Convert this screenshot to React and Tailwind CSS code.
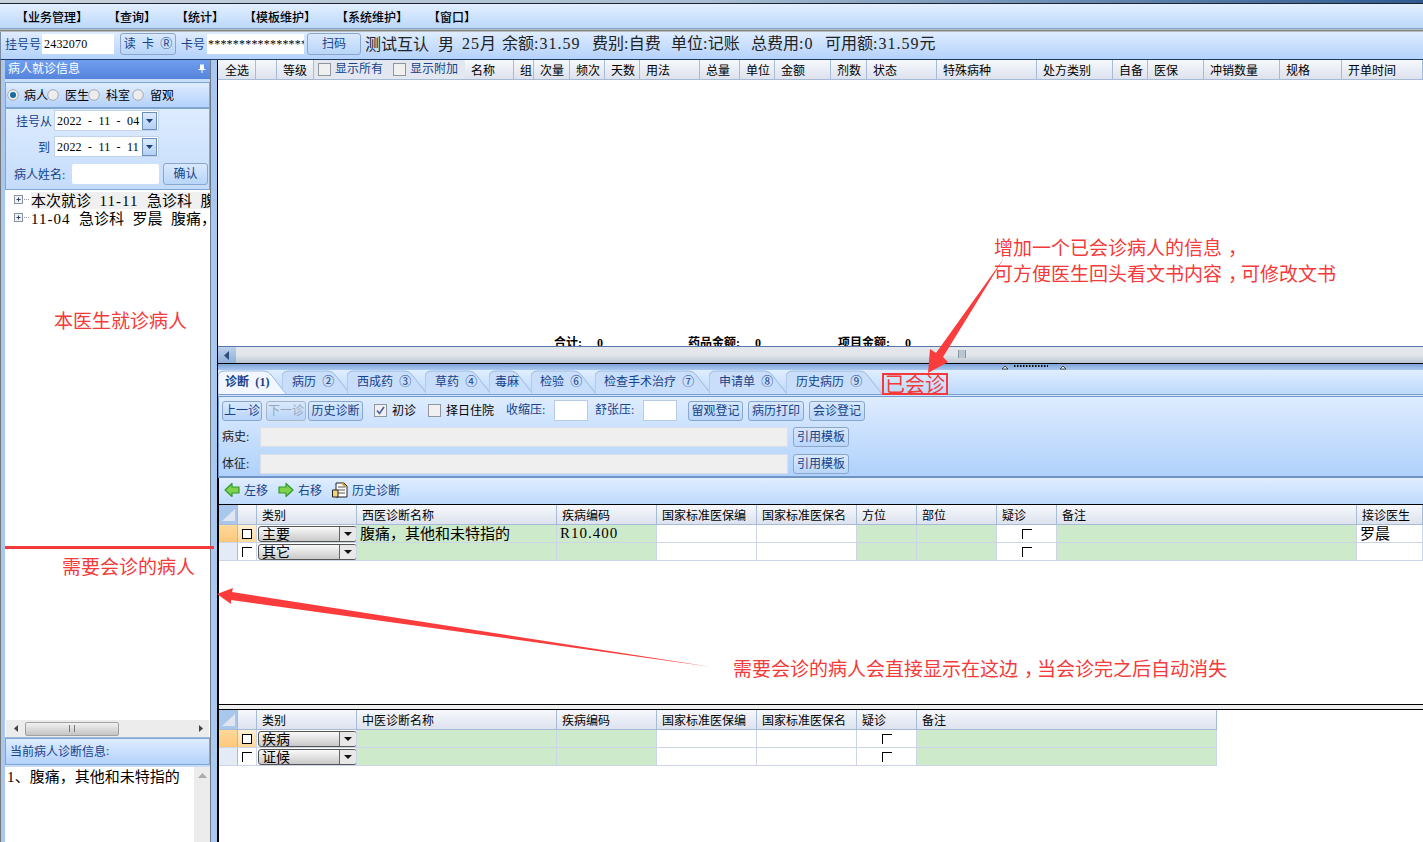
import React from "react";

const T = ({ children, wide }) => {
  const parts = String(children).split(/([\x20-\x7e]+)/);
  return (
    <>
      {parts.map((p, i) =>
        /^[\x20-\x7e]+$/.test(p) ? (
          <span key={i} className={`font-['Liberation_Serif',serif] [word-spacing:0.25em] ${wide ? "tracking-[1px]" : "tracking-[0.2px]"}`}>{p}</span>
        ) : (
          <React.Fragment key={i}>{p}</React.Fragment>
        )
      )}
    </>
  );
};

const Btn = ({ w, children, disabled, h = "h-[20px]", className = "" }) => (
  <div
    style={{ width: w }}
    className={`${h} ${className} shrink-0 flex items-center justify-center pb-[2px] rounded-[3px] border border-[#8aa6cc] bg-gradient-to-b from-[#d9e9fd] to-[#b9d5f8] text-[12px] ${disabled ? "text-[#9aa6b5] border-[#a9b5c5]" : "text-[#15428b]"}`}
  >
    <T>{children}</T>
  </div>
);

const Radio = ({ on }) => (
  <svg width="12" height="12" viewBox="0 0 12 12" className="shrink-0">
    <circle cx="6" cy="6" r="5.3" fill="#ededed" stroke="#a5a9ae" />
    {on && <circle cx="6" cy="6" r="3" fill="#156a9e" />}
  </svg>
);

const Check = ({ on }) => (
  <div className="w-[13px] h-[13px] shrink-0 border border-[#8f969e] bg-[#f0f0f0] flex items-center justify-center">
    {on && (
      <svg width="11" height="11" viewBox="0 0 11 11">
        <path d="M2 5.5 L4.5 8.5 L9 2" fill="none" stroke="#4a5f9c" strokeWidth="1.6" />
      </svg>
    )}
  </div>
);

const DateBox = ({ value }) => (
  <div className="w-[105px] h-[21px] bg-white border border-[#c3d3ea] flex items-center pl-[2px] justify-between text-[12px] text-black">
    <span><T>{value}</T></span>
    <div className="w-[15px] h-[18px] mr-px bg-gradient-to-b from-[#dceafd] to-[#b4d0f5] border border-[#6d8fbe] flex items-center justify-center">
      <svg width="7" height="4" viewBox="0 0 7 4"><path d="M0 0H7L3.5 4Z" fill="#1e3f7a" /></svg>
    </div>
  </div>
);

const topCols = [
  ["全选", 38], ["", 21], ["等级", 37], ["__extra", 151], ["名称", 49], ["组", 20], ["次量", 36], ["频次", 35], ["天数", 35],
  ["用法", 60], ["总量", 40], ["单位", 35], ["金额", 56], ["剂数", 36], ["状态", 70], ["特殊病种", 100], ["处方类别", 76],
  ["自备", 35], ["医保", 56], ["冲销数量", 76], ["规格", 62], ["开单时间", 81],
];

const Tab = ({ w, label, active, pl, ml = 0 }) => (
  <div style={{ width: w, marginLeft: ml, paddingLeft: pl }} className={`relative h-[24px] shrink-0 flex items-center pb-[2px] text-[12px] text-[#15428b] ${active ? "z-10 font-bold" : ""}`}>
    <svg className="absolute inset-0" width={w} height="24">
      <path
        d={`M0 24 V7 Q0 1 7 1 H${w - 22} Q${w - 17} 1 ${w - 14} 6 L${w} 24`}
        fill={active ? "#f2f7ff" : "#c9defa"}
        stroke="#9db9dd"
      />
    </svg>
    <span className="relative"><T>{label}</T></span>
  </div>
);

const Head = ({ w, label, pl = 5 }) => (
  <div style={{ width: w, paddingLeft: pl }} className="shrink-0 h-full border-r border-[#a5bbd6] flex items-center text-[12px] text-black">
    {label}
  </div>
);

const Corner = () => (
  <div className="w-[19px] shrink-0 h-full border-r border-[#a5bbd6] bg-[#a9c6ec] flex items-center justify-center">
    <svg width="15" height="14" viewBox="0 0 15 14"><path d="M14 1V13H1Z" fill="#dfe6f0" /></svg>
  </div>
);

const Combo = ({ label }) => (
  <div className="w-[99px] h-[16px] shrink-0 ml-px rounded-[3px] border border-[#555] bg-gradient-to-b from-[#fafafa] to-[#c9c9c9] flex items-center justify-between overflow-hidden text-[14px] text-black pl-[3px]">
    <span className="leading-[14px] pb-px">{label}</span>
    <div className="w-[17px] h-full border-l border-[#666] bg-[#e8e8e8] flex items-center justify-center">
      <svg width="8" height="4" viewBox="0 0 8 4"><path d="M0 0H8L4 4Z" fill="#111" /></svg>
    </div>
  </div>
);

const Cell = ({ w, green, children, center, className = "" }) => (
  <div style={{ width: w }} className={`shrink-0 h-full border-r border-[#ccd4e8] flex items-center text-[15px] text-black overflow-hidden ${green ? "bg-[#cdeacb]" : "bg-white"} ${center ? "justify-center" : "pl-[3px]"} ${className}`}>
    {children}
  </div>
);

const MiniCheck = () => (
  <div className="w-[10px] h-[10px] border-l border-t border-black" />
);

const RowLead = ({ sel }) => (
  <>
    <div className={`w-[19px] shrink-0 h-full border-r border-[#a5bbd6] ${sel ? "bg-gradient-to-b from-[#fcd89a] to-[#fdc87a]" : "bg-[#e4ebf7]"}`} />
    <div className={`w-[19px] shrink-0 h-full border-r border-[#ccd4e8] flex items-center justify-center ${sel ? "bg-gradient-to-b from-[#fff0d5] to-[#fcd89a]" : "bg-white"}`}>
      <div className={`w-[10px] h-[10px] border-l border-t border-black ${sel ? "border-r border-b bg-white" : ""}`} />
    </div>
  </>
);

const HeaderRow = ({ cols, h }) => (
  <div className={`flex ${h} bg-gradient-to-b from-[#f6f8fb] to-[#dde2ee] border-b border-[#a5bbd6]`}>
    <Corner />
    {cols.map((c, i) => (
      <Head key={i} w={c[1]} label={c[0]} />
    ))}
  </div>
);

const Arrow = ({ dir }) => (
  <svg width="16" height="16" viewBox="0 0 16 16" className="shrink-0">
    <path
      d={dir === "l" ? "M1 8 L8 1.5 V5 H15 V11 H8 V14.5 Z" : "M15 8 L8 1.5 V5 H1 V11 H8 V14.5 Z"}
      fill="#7fd24a"
      stroke="#2f9a2a"
      strokeWidth="1.2"
      strokeLinejoin="round"
    />
  </svg>
);

const diagCols = [["", 19], ["类别", 100], ["西医诊断名称", 200], ["疾病编码", 100], ["国家标准医保编", 100], ["国家标准医保名", 100], ["方位", 60], ["部位", 80], ["疑诊", 60], ["备注", 300], ["接诊医生", 66]];
const tcmCols = [["", 19], ["类别", 100], ["中医诊断名称", 200], ["疾病编码", 100], ["国家标准医保编", 100], ["国家标准医保名", 100], ["疑诊", 60], ["备注", 300]];

const DiagRow = ({ sel, combo, name, code, doctor }) => (
  <div className="flex h-[18px] border-b border-[#ccd4e8]">
    <RowLead sel={sel} />
    <Cell w={100} className="!pl-0"><Combo label={combo} /></Cell>
    <Cell w={200} green className="pb-[3px]"><T>{name}</T></Cell>
    <Cell w={100} green><T wide>{code}</T></Cell>
    <Cell w={100} />
    <Cell w={100} />
    <Cell w={60} green />
    <Cell w={80} green />
    <Cell w={60} center><MiniCheck /></Cell>
    <Cell w={300} green />
    <Cell w={66} className="pb-[3px]">{doctor}</Cell>
  </div>
);

const TcmRow = ({ sel, combo }) => (
  <div className="flex h-[18px] w-[998px] border-b border-[#ccd4e8]">
    <RowLead sel={sel} />
    <Cell w={100} className="!pl-0"><Combo label={combo} /></Cell>
    <Cell w={200} green />
    <Cell w={100} green />
    <Cell w={100} />
    <Cell w={100} />
    <Cell w={60} center><MiniCheck /></Cell>
    <Cell w={300} green />
  </div>
);

export default function App() {
  return (
    <div className="relative w-[1423px] h-[842px] overflow-hidden whitespace-pre flex flex-col bg-[#b4d0f5] font-['Noto_Sans_CJK_SC',sans-serif] leading-none">
      {/* window top */}
      <div className="h-[3px] shrink-0 bg-gradient-to-r from-[#c9d3dc] via-[#a9bed2] to-[#2f5a8f]" />
      <div className="h-px shrink-0 bg-[#1b2433]" />
      {/* menu */}
      <div className="h-[25px] shrink-0 flex items-center gap-5 pl-[16px] pt-px bg-gradient-to-b from-[#e3efff] to-[#bcd8fb] border-b border-[#7fa6d3] text-[12px] font-medium text-black">
        <span>【业务管理】</span>
        <span>【查询】</span>
        <span>【统计】</span>
        <span>【模板维护】</span>
        <span>【系统维护】</span>
        <span>【窗口】</span>
      </div>
      <div className="h-[3px] shrink-0 bg-gradient-to-b from-[#dfe3e8] via-[#7f7f7f] to-[#d5dbe3]" />
      {/* patient toolbar */}
      <div className="h-[28px] shrink-0 flex items-center pl-[4px] pb-[4px] bg-gradient-to-b from-[#deecff] to-[#b4d2fb] border-b border-[#1f3a66] border-l border-l-[#7a8ea8]">
        <span className="w-[36px] text-[12px] text-[#15428b]">挂号号</span>
        <div className="ml-px w-[72px] h-[20px] bg-white flex items-center pl-[2px] text-[12px] text-black"><T>2432070</T></div>
        <Btn w={56} h="h-[22px]" className="ml-[6px]">读 卡 Ⓡ</Btn>
        <span className="ml-[5px] w-[25px] text-[12px] text-[#15428b]">卡号</span>
        <div className="ml-[1px] w-[97px] h-[20px] bg-white flex items-center pl-[1px] text-[12px] text-black overflow-hidden"><T>****************</T></div>
        <Btn w={54} h="h-[22px]" className="ml-[3px]">扫码</Btn>
        <div className="ml-[4px] flex items-center pb-[2px] text-[16px] text-[#222]">
          <span className="w-[73px]">测试互认</span>
          <span className="w-[24px]">男</span>
          <span className="w-[40px]"><T wide>25</T>月</span>
          <span className="w-[90px]">余额<T wide>:31.59</T></span>
          <span className="w-[79px]">费别<T>:</T>自费</span>
          <span className="w-[80px]">单位<T>:</T>记账</span>
          <span className="w-[74px]">总费用<T wide>:0</T></span>
          <span>可用额<T wide>:31.59</T>元</span>
        </div>
      </div>

      <div className="flex-1 flex min-h-0">
        {/* LEFT */}
        <div className="w-[218px] shrink-0 flex">
          <div className="w-[5px] shrink-0 border-l border-[#777] bg-[#a9c8f0]" />
          <div className="w-[206px] shrink-0 flex flex-col border-r border-[#6f7a88] bg-white">
            <div className="h-[19px] shrink-0 bg-gradient-to-b from-[#6f9eef] to-[#5584dc] flex items-center justify-between pl-[3px] pr-[4px] pb-[3px] text-[12px] text-white">
              <span>病人就诊信息</span>
              <svg width="8" height="9" viewBox="0 0 8 9"><path d="M2 0.5H6V5H7.5V6H4.5V9H3.5V6H0.5V5H2Z" fill="#fff" /></svg>
            </div>
            <div className="h-[3px] shrink-0 bg-[#c9dcf6]" />
            <div className="h-[26px] shrink-0 flex items-center pl-[1px] bg-gradient-to-b from-[#deecff] to-[#b4d2fb] border border-[#7fa6d3] text-[12px] text-black">
              <Radio on />
              <span className="ml-[5px] mr-[-1px]">病人</span>
              <Radio />
              <span className="ml-[6px] mr-[-1px]">医生</span>
              <Radio />
              <span className="ml-[6px]">科室</span>
              <span className="ml-[2px]"><Radio /></span>
              <span className="ml-[6px]">留观</span>
            </div>
            <div className="h-[82px] shrink-0 flex flex-col bg-gradient-to-b from-[#deecff] to-[#c4dcfb] border border-[#7fa6d3] border-t-[#7fa6d3] pt-[1px]">
              <div className="flex items-center h-[21px] text-[12px] text-[#15428b]">
                <span className="ml-[10px] w-[38px]">挂号从</span>
                <DateBox value="2022 - 11 - 04" />
              </div>
              <div className="flex items-center h-[21px] mt-[5px] text-[12px] text-[#15428b]">
                <span className="ml-[32px] w-[16px]">到</span>
                <DateBox value="2022 - 11 - 11" />
              </div>
              <div className="flex items-center h-[22px] mt-[6px] text-[12px] text-[#15428b]">
                <span className="ml-[8px] w-[58px]">病人姓名<T>:</T></span>
                <div className="w-[87px] h-[20px] bg-white rounded-[2px]" />
                <Btn w={45} h="h-[22px]" className="ml-[4px]">确认</Btn>
              </div>
            </div>
            {/* tree */}
            <div className="flex-1 min-h-0 pt-[1px] overflow-hidden text-[15px] text-black">
              {["本次就诊 11-11 急诊科 腹痛，其他和未特指的", "11-04 急诊科 罗晨 腹痛，其他和未特指的"].map((t, i) => (
                <div key={i} className="flex items-center h-[18px] pl-[9px]">
                  <svg width="17" height="10" viewBox="0 0 17 10" className="shrink-0">
                    <rect x="0.5" y="0.5" width="8" height="8" fill="#eef1f6" stroke="#8a929e" />
                    <path d="M2.5 4.5H6.5M4.5 2.5V6.5" stroke="#2a3f6a" />
                    <path d="M10 4.5H15" stroke="#999" strokeDasharray="1 1" />
                  </svg>
                  <span className={`${i === 0 ? "bg-[#f0f0f0]" : ""}`}><T wide>{t}</T></span>
                </div>
              ))}
            </div>
            {/* h scroll */}
            <div className="h-[17px] shrink-0 mx-px bg-[#ececec] flex items-center">
              <svg width="19" height="9" viewBox="0 0 19 9" className="shrink-0"><path d="M12 1V8L8 4.5Z" fill="#444" /></svg>
              <div className="w-[94px] h-[14px] rounded-[2px] border border-[#a0a0a0] bg-gradient-to-b from-[#f2f2f2] to-[#c4c4c4] flex items-center justify-center">
                <div className="w-[6px] h-[7px] border-x border-[#777]" />
              </div>
              <div className="flex-1" />
              <svg width="16" height="9" viewBox="0 0 16 9" className="shrink-0"><path d="M6 1V8L10 4.5Z" fill="#444" /></svg>
            </div>
            <div className="h-[1px] shrink-0 bg-[#9fb9dc]" />
            <div className="h-[27px] shrink-0 flex items-center pl-[4px] pb-px bg-gradient-to-b from-[#deecff] to-[#b4d2fb] border border-[#7fa6d3] text-[12px] text-[#15428b]">
              当前病人诊断信息<T>:</T>
            </div>
            <div className="h-[2px] shrink-0 bg-[#c9dcf6]" />
            <div className="h-[75px] shrink-0 flex">
              <div className="flex-1 pl-[2px] text-[15px] text-black leading-[17px]"><T>1</T>、腹痛，其他和未特指的</div>
              <div className="w-[16px] bg-[#ececec] flex justify-center pt-[6px]">
                <svg width="9" height="5" viewBox="0 0 9 5"><path d="M0 5L4.5 0L9 5Z" fill="#aaa" /></svg>
              </div>
            </div>
          </div>
          <div className="w-[6px] shrink-0 bg-[#a9c8f0]" />
          <div className="w-px shrink-0 bg-black" />
        </div>

        {/* RIGHT */}
        <div className="flex-1 min-w-0 flex flex-col bg-white">
          <div className="flex h-[20px] shrink-0 bg-gradient-to-b from-[#f6f8fb] to-[#dde2ee] border-b border-[#a5bbd6] overflow-hidden">
            {topCols.map(([l, w], i) =>
              l === "__extra" ? (
                <div key={i} style={{ width: w }} className="shrink-0 flex items-center pl-[4px] text-[12px] text-[#15428b] bg-[#e3e8f0]">
                  <Check />
                  <span className="ml-[4px] pb-[4px]">显示所有</span>
                  <span className="ml-[10px]"><Check /></span>
                  <span className="ml-[4px] pb-[4px]">显示附加</span>
                </div>
              ) : (
                <Head key={i} w={w} label={l} pl={i === 0 ? 7 : 6} />
              )
            )}
          </div>
          <div className="h-[266px] shrink-0 flex items-end overflow-hidden">
            <div className="h-[11px] overflow-hidden flex pl-[336px] text-[12px] font-bold leading-[14px] text-black">
              <span className="w-[134px]">合计<T wide>:  0</T></span>
              <span className="w-[150px]">药品金额<T wide>:  0</T></span>
              <span>项目金额<T wide>:  0</T></span>
            </div>
          </div>
          {/* h scroll */}
          <div className="h-[18px] shrink-0 flex border-t border-[#5a75a8] border-b border-b-black bg-gradient-to-b from-[#e3e7eb] via-[#e3e7eb] to-[#b9c5d1]">
            <div className="w-[18px] shrink-0 bg-gradient-to-b from-[#bcd0ea] to-[#8fb0d8] flex items-center justify-center">
              <svg width="6" height="9" viewBox="0 0 6 9"><path d="M5 0V9L0 4.5Z" fill="#2e4d7b" /></svg>
            </div>
            <div className="ml-[722px] mt-[3px] w-[8px] h-[8px] border-x border-[#8a97a5] bg-[#b9c5d1]" />
          </div>
          {/* splitter */}
          <div className="h-[6px] shrink-0 bg-gradient-to-b from-[#7ea3d6] to-[#a9c8f0] flex items-center pl-[784px]">
            <svg width="64" height="6" viewBox="0 0 64 6">
              <path d="M0 5L3 2L6 5Z" fill="#eee" stroke="#111" strokeWidth="0.7" />
              <path d="M12 2H46" stroke="#111" strokeWidth="2" strokeDasharray="1.5 1.5" />
              <path d="M58 5L61 2L64 5Z" fill="#eee" stroke="#111" strokeWidth="0.7" />
            </svg>
          </div>
          {/* tabs */}
          <div className="h-[25px] shrink-0 flex items-end bg-gradient-to-b from-[#e0eeff] to-[#bcd8fb] border-b border-[#7ba0d0] overflow-hidden">
            <Tab w={68} label="诊断 (1)" active pl={7} />
            <Tab w={68} ml={-4} label="病历 ②" pl={10} />
            <Tab w={80} ml={-3} label="西成药 ③" pl={10} />
            <Tab w={66} ml={-2} label="草药 ④" pl={10} />
            <Tab w={44} ml={-2} label="毒麻" pl={6} />
            <Tab w={65} ml={-2} label="检验 ⑥" pl={9} />
            <Tab w={116} ml={-1} label="检查手术治疗 ⑦" pl={9} />
            <Tab w={78} ml={-2} label="申请单 ⑧" pl={10} />
            <Tab w={96} ml={-1} label="历史病历 ⑨" pl={10} />
          </div>
          <div className="h-px shrink-0 bg-[#d3e4fb]" />
          {/* form */}
          <div className="h-[82px] shrink-0 flex flex-col border-t border-[#6f9ad0] border-b-2 border-b-[#6f93c5] border-l border-l-[#6f9ad0] bg-gradient-to-b from-[#deecff] to-[#b0d1fb] text-[12px] text-[#15428b] pl-[3px] pt-[3px]">
            <div className="h-[21px] flex items-center">
              <Btn w={40}>上一诊</Btn>
              <Btn w={40} disabled className="ml-[4px]">下一诊</Btn>
              <Btn w={55} className="ml-[2px]">历史诊断</Btn>
              <span className="ml-[11px]"><Check on /></span>
              <span className="ml-[5px] pb-[2px] text-black">初诊</span>
              <span className="ml-[12px]"><Check /></span>
              <span className="ml-[5px] pb-[2px] text-black">择日住院</span>
              <span className="ml-[12px] pb-[2px] w-[48px]">收缩压<T>:</T></span>
              <div className="w-[34px] h-[21px] bg-white border border-[#b7cbe6]" />
              <span className="ml-[7px] pb-[2px] w-[48px]">舒张压<T>:</T></span>
              <div className="w-[34px] h-[21px] bg-white border border-[#b7cbe6]" />
              <Btn w={55} className="ml-[11px]">留观登记</Btn>
              <Btn w={56} className="ml-[5px]">病历打印</Btn>
              <Btn w={56} className="ml-[5px]">会诊登记</Btn>
            </div>
            <div className="h-[20px] flex items-center mt-[6px]">
              <span className="w-[38px] pb-[2px] text-[#222]">病史<T>:</T></span>
              <div className="w-[528px] h-[20px] bg-[#efefef] border border-[#d8dfe8]" />
              <Btn w={56} className="ml-[5px]">引用模板</Btn>
            </div>
            <div className="h-[20px] flex items-center mt-[7px]">
              <span className="w-[38px] pb-[2px] text-[#222]">体征<T>:</T></span>
              <div className="w-[528px] h-[20px] bg-[#efefef] border border-[#d8dfe8]" />
              <Btn w={56} className="ml-[5px]">引用模板</Btn>
            </div>
          </div>
          {/* bar */}
          <div className="h-[27px] shrink-0 flex items-center pl-[5px] pb-[2px] bg-gradient-to-b from-[#e0eeff] to-[#bfdafc] border-b border-b-black border-l border-l-black text-[12px] text-[#15428b]">
            <Arrow dir="l" />
            <span className="ml-[4px]">左移</span>
            <span className="ml-[10px]"><Arrow dir="r" /></span>
            <span className="ml-[4px]">右移</span>
            <svg width="16" height="16" viewBox="0 0 16 16" className="ml-[10px] shrink-0">
              <path d="M4 1H12L15 4V15H4Z" fill="#fff" stroke="#222" />
              <path d="M6 5H13M6 8H13M6 11H13" stroke="#555" />
              <path d="M0.5 8H6V15H0.5Z" fill="#f4d479" stroke="#222" />
              <path d="M10 1L14 5" stroke="#c9a227" strokeWidth="2" />
            </svg>
            <span className="ml-[4px]">历史诊断</span>
          </div>
          {/* Diag grid */}
          <div className="h-[200px] shrink-0 border-l border-black border-b border-b-black bg-white overflow-hidden">
            <HeaderRow cols={diagCols} h="h-[20px]" />
            <DiagRow sel combo="主要" name="腹痛，其他和未特指的" code="R10.400" doctor="罗晨" />
            <DiagRow combo="其它" name="" code="" doctor="" />
          </div>
          <div className="h-[4px] shrink-0 bg-[#eeeeee] border-l border-black" />
          <div className="flex-1 min-h-0 border-l border-black border-t border-t-black bg-white overflow-hidden">
            <div className="w-[998px]">
              <HeaderRow cols={tcmCols} h="h-[20px]" />
            </div>
            <TcmRow sel combo="疾病" />
            <TcmRow combo="证候" />
          </div>
        </div>
      </div>

      {/* annotations */}
      <svg className="absolute inset-0 pointer-events-none" width="1423" height="842" viewBox="0 0 1423 842">
        <path d="M5 547.5H214" stroke="#f43a3a" strokeWidth="3" />
        <path d="M712 667 L232 592 L233 588 L217 594 L231 604 L231 600 Z" fill="#fa3c3c" />
        <path d="M1004 258 L943 357 L948 362 L928 373 L930 349 L936 353 Z" fill="#fa3c3c" />
      </svg>
      <div className="absolute left-[882px] top-[373px] w-[66px] h-[22px] border-[2.5px] border-[#f43a3a] flex items-center justify-center text-[20px] text-[#f43a3a]">已会诊</div>
      <div className="absolute left-[54px] top-[310px] text-[19px] leading-[20px] text-[#f43a3a]">本医生就诊病人</div>
      <div className="absolute left-[62px] top-[556px] text-[19px] leading-[20px] text-[#f43a3a]">需要会诊的病人</div>
      <div className="absolute left-[994px] top-[234px] text-[19px] leading-[26px] text-[#f43a3a]">增加一个已会诊病人的信息<span className="ml-[6px] mr-[-6px]">，</span>{"\n"}可方便医生回头看文书内容<span className="ml-[6px] mr-[-6px]">，</span>可修改文书</div>
      <div className="absolute left-[733px] top-[658px] text-[19px] leading-[20px] text-[#f43a3a]">需要会诊的病人会直接显示在这边<span className="ml-[6px] mr-[-6px]">，</span>当会诊完之后自动消失</div>
    </div>
  );
}
